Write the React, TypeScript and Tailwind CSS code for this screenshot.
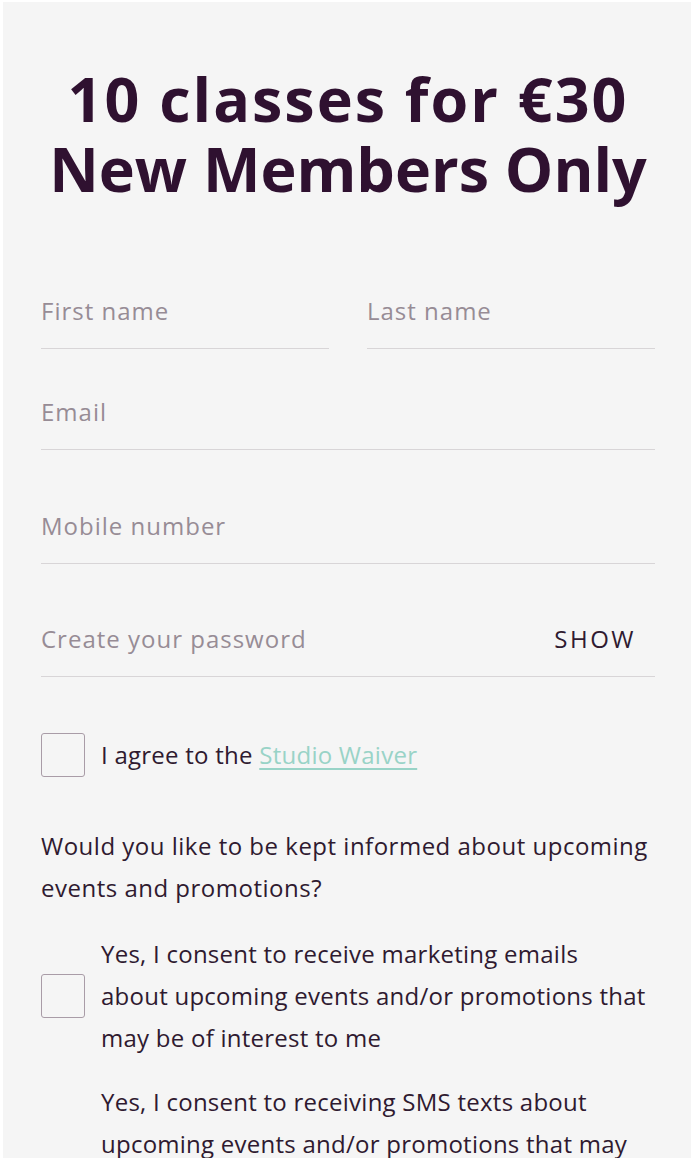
import { useState } from "react"

const font = { fontFamily: "'Open Sans', 'Noto Sans', sans-serif" }

function Field({ placeholder, type = "text", className = "" }: { placeholder: string; type?: string; className?: string }) {
  return (
    <div className={`border-b border-[#d8d5d7] pb-[19px] ${className}`}>
      <input
        type={type}
        placeholder={placeholder}
        className="block h-[36px] w-full bg-transparent text-[24px] tracking-[1px] text-[#2f1a30] outline-none placeholder:text-[#978c95]"
        style={font}
      />
    </div>
  )
}

function Check({ children, className = "" }: { children: React.ReactNode; className?: string }) {
  const [checked, setChecked] = useState(false)
  return (
    <label className={`flex items-center gap-4 ${className}`}>
      <button
        type="button"
        onClick={() => setChecked(!checked)}
        className={`h-[44px] w-[44px] shrink-0 rounded-[3px] border border-[#a99ca7] ${checked ? "bg-[#2f1130]" : "bg-transparent"}`}
      />
      <span className="text-[24px] leading-[42px] tracking-[0.25px] text-[#2f1a30]">{children}</span>
    </label>
  )
}

export default function App() {
  const [showPassword, setShowPassword] = useState(false)

  return (
    <div className="min-h-screen bg-white" style={font}>
      <div className="ml-[3px] mt-[2px] w-[688px] bg-[#f5f5f5] pb-16 pl-[38px] pr-[36px] pt-[62px]">
        <h1 className="text-center text-[61px] font-bold leading-[70px] text-[#2f1130]">
          <span className="tracking-[2px]">10 classes for €30</span>
          <br />
          New Members Only
        </h1>

        <form className="mt-[89px]">
          <div className="grid grid-cols-2 gap-[38px]">
            <Field placeholder="First name" />
            <Field placeholder="Last name" />
          </div>
          <Field placeholder="Email" type="email" className="mt-[45px]" />
          <Field placeholder="Mobile number" type="tel" className="mt-[58px]" />

          <div className="mt-[57px] flex items-center border-b border-[#d8d5d7] pb-[19px]">
            <input
              type={showPassword ? "text" : "password"}
              placeholder="Create your password"
              className="block h-[36px] flex-1 bg-transparent text-[24px] tracking-[1px] text-[#2f1a30] outline-none placeholder:text-[#978c95]"
              style={font}
            />
            <button
              type="button"
              onClick={() => setShowPassword(!showPassword)}
              className="mr-[19px] text-[24px] uppercase tracking-[2.5px] text-[#2f1a30]"
            >
              {showPassword ? "Hide" : "Show"}
            </button>
          </div>

          <Check className="mt-[56px]">
            I agree to the{" "}
            <a href="#" className="text-[#99d3c7] underline underline-offset-4">
              Studio Waiver
            </a>
          </Check>

          <p className="mt-[48px] text-[24px] leading-[42px] tracking-[0.5px] text-[#2f1a30]">
            Would you like to be kept informed about upcoming events and promotions?
          </p>

          <Check className="mt-[24px]">
            Yes, I consent to receive marketing emails
            <br />
            about upcoming events and/or promotions that
            <br />
            may be of interest to me
          </Check>

          <Check className="mt-[22px]">
            Yes, I consent to receiving SMS texts about
            <br />
            upcoming events and/or promotions that may
            <br />
            be of interest to me. Message and data rates may apply. You can opt out at any time by replying STOP.
          </Check>
        </form>
      </div>
    </div>
  )
}
